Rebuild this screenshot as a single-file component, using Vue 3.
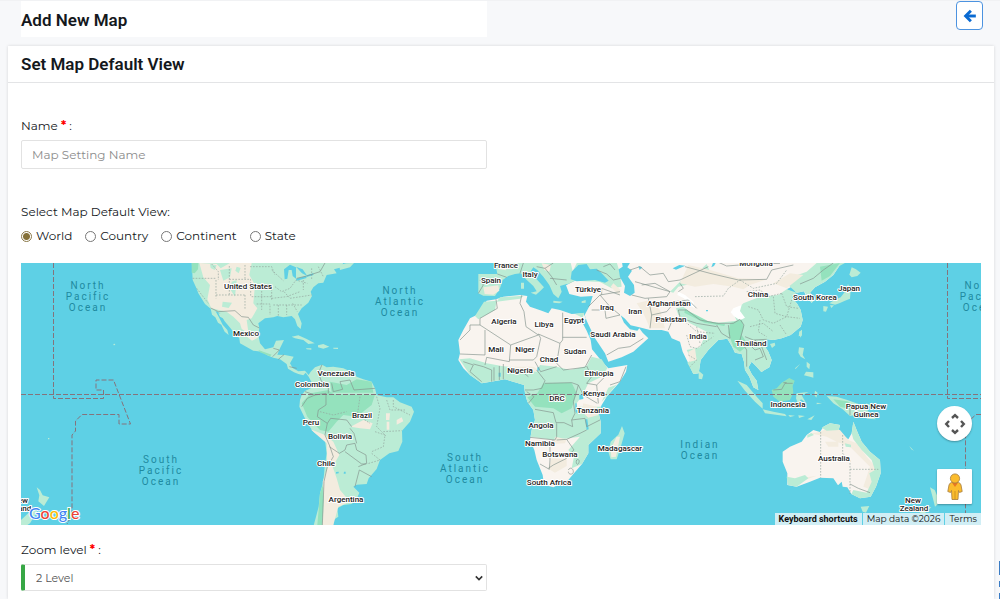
<script setup>
import { ref } from 'vue'

const name = ref('')
const view = ref('World')
const level = ref('2')
const views = ['World', 'Country', 'Continent', 'State']

const countries = [
  ['United States', 248, 289], ['Mexico', 246, 336], ['Venezuela', 336, 376], ['Colombia', 312, 387],
  ['Brazil', 362, 418], ['Peru', 311, 425], ['Bolivia', 340, 439], ['Chile', 326, 466], ['Argentina', 346, 502],
  ['France', 506, 268], ['Spain', 491, 283], ['Italy', 530, 277], ['Türkiye', 588, 292], ['Algeria', 504, 324],
  ['Libya', 544, 327], ['Egypt', 574, 323], ['Iraq', 607, 310], ['Iran', 635, 314], ['Saudi Arabia', 613, 337],
  ['Mali', 496, 352], ['Niger', 525, 352], ['Chad', 549, 362], ['Sudan', 575, 354], ['Nigeria', 520, 373],
  ['Ethiopia', 599, 376], ['Kenya', 594, 396], ['DRC', 557, 401], ['Tanzania', 593, 413], ['Angola', 541, 428],
  ['Namibia', 540, 446], ['Botswana', 560, 457], ['South Africa', 549, 485], ['Madagascar', 620, 451],
  ['Afghanistan', 669, 306], ['Pakistan', 671, 322], ['India', 698, 339], ['China', 758, 297], ['Mongolia', 756, 266],
  ['Thailand', 751, 346], ['South Korea', 815, 300], ['Japan', 849, 291], ['Indonesia', 788, 407],
  ['Papua New', 866, 409], ['Guinea', 866, 417], ['Australia', 834, 461], ['New', 913, 503], ['Zealand', 914, 511],
  ['New', 20, 503], ['Zealand', 17, 511]
]

const oceans = [
  [88, 289, ['North', 'Pacific', 'Ocean']], [400, 294, ['North', 'Atlantic', 'Ocean']],
  [161, 463, ['South', 'Pacific', 'Ocean']], [465, 461, ['South', 'Atlantic', 'Ocean']],
  [700, 448, ['Indian', 'Ocean']], [982, 289, ['North', 'Pacific', 'Ocean']]
]
</script>

<template>
  <main class="page">
    <header class="top">
      <h1 class="title">Add New Map</h1>
      <button class="back" type="button" aria-label="Back">
        <svg viewBox="0 0 24 24" width="14" height="14" fill="none" stroke="currentColor" stroke-width="5"><path d="M22 12H5" /><path d="M13.500 3L4.500 12 13.500 21" /></svg>
      </button>
    </header>

    <section class="card">
      <h2 class="card-title">Set Map Default View</h2>
      <form class="form" @submit.prevent>
        <div class="field">
          <label for="map-name">Name <span class="req">*</span> :</label>
          <input id="map-name" v-model="name" class="text" type="text" placeholder="Map Setting Name">
        </div>

        <fieldset class="views">
          <legend>Select Map Default View:</legend>
          <div class="options">
            <label v-for="v in views" :key="v" class="option">
              <input v-model="view" type="radio" name="view" :value="v">{{ v }}
            </label>
          </div>
        </fieldset>

        <div class="map">
          <svg class="world" viewBox="21 263 960 262" preserveAspectRatio="xMidYMid slice" role="img" aria-label="World map">
            <g transform="translate(190 260) scale(.33333)">
              <path class="green" d="M5 0L8 60 18 82 25 100 45 132 62 146 66 164 76 172 84 188 94 194 104 215 116 225 112 210 98 194 88 174 76 152 90 160 104 184 116 198 130 215 148 235 150 250 190 272 215 275 232 286 250 293 270 298 290 312 294 326 312 337 325 342 340 346 347 338 356 350 364 365 362 385 345 393 335 405 330 420 328 440 340 465 352 490 370 515 405 540 410 580 404 620 400 665 390 700 386 740 378 770 370 800H430L430 780 445 770 442 745 460 735 485 732 500 718 508 698 490 680 500 674 530 672 536 655 560 627 570 600 598 580 625 573 637 545 636 512 660 485 672 455 665 440 630 427 610 412 590 412 560 405 555 385 545 365 520 358 500 350 490 338 460 325 430 320 410 322 396 314 375 322 362 335 356 345 345 332 325 334 308 324 300 310 311 290 285 285 262 284 270 265 282 240 258 242 250 262 225 268 210 250 205 225 208 205 205 190 225 175 250 172 262 168 280 172 305 168 315 178 322 198 332 207 335 190 324 162 335 145 355 128 366 108 362 95 370 82 385 70 400 68 410 45 440 40 432 28 455 22 462 0Z" />
              <path class="green" d="M305 230L325 226 350 237 374 250 355 252 340 240 315 235ZM384 256L400 252 418 260 400 266 384 262ZM348 265l16 0 0 4-14-1ZM430 263l14 0 0 4-14-1ZM448 15L468 10 492 9 480 22 450 30Z" />
              <path class="deep" d="M5 0H26L24 28 14 40 5 38ZM362 400L415 390 430 402 555 404 545 435 500 470 460 465 440 485 415 515 390 510 352 470 335 430ZM420 365L470 375 500 358 545 365 550 398 425 398ZM390 700L402 665 397 795H382ZM205 270l40 14-5 5-30-12Z" />
              <path class="sand" d="M28 9L80 12 92 25 120 9H185L178 45 195 75 190 130 202 145 185 175 170 180 175 215 160 225 150 190 130 170 110 155 64 145 52 118 60 75 40 52ZM362 508L405 525 430 545 448 585 428 620 440 655 450 690 480 725 445 740 430 795H397L402 720 398 665 412 625 410 550 375 520ZM482 500L520 480 548 490 540 508 510 505ZM588 460h12l-2 20 -10 0ZM590 485h8v24h-8ZM620 480l15-8 5 12-20 10ZM168 228l38 4-20 10Z" />
              <path class="green" d="M90 30L125 25 120 52 100 62ZM125 65L140 60 135 110 122 90ZM98 125l28 3-10 16-20-4ZM85 160L110 162 145 200 168 215 150 220 120 185 90 170ZM60 12l20 4-6 14-12-6ZM140 20l12 4-6 16-10-8Z" />
              <path class="water" d="M282 28L300 14 318 22 318 56 308 48 305 30 296 30 292 56 284 58ZM318 20l20 8 14 20-16-8ZM318 56l30-8 2 6-30 8ZM350 46l20-6 0 5-20 6ZM462 635l5 0 0 6-6 0ZM438 636l8-1 0 5-8 1Z" />
              <path class="state" d="M8 55H78M78 60V115M20 85L55 130M118 18V105M165 15V60M78 105H165M65 12L85 35V60M118 58H182V110M180 20H245L255 45M165 105V150M185 75H245V120M200 132H240V165M245 115L290 110 330 95M250 135H335M265 135V170M290 135V165M308 130L322 155M255 80L275 95 300 85 318 60 352 70M282 95L300 115 365 105M340 60V90M245 30L280 62M365 25V60M385 20L400 50M510 410L502 465 540 490M560 410L570 445 560 500 590 530M590 420L600 450 645 450M610 420V440L660 465M555 515L585 525 580 560 545 575M580 515L635 512M545 580L570 600 530 612M390 455L430 465 470 455M185 110H245M215 75V110M215 110V150" />
              <path class="border" d="M62 144L85 155 135 152 155 170 175 172 190 195 208 204M320 55L350 48 390 35 405 9M250 265L268 270 248 290M265 298L282 284M298 320L320 325M396 314L385 340 395 365 415 370 415 400M345 395L375 405 408 400 408 435 385 450 382 470 412 490 422 475 470 480 485 500M425 370L430 395 458 388 450 365 480 360 492 390 555 385M335 440L352 415 375 405M412 490L405 525 420 560 430 590 412 620 402 665 397 795M418 560L448 580 465 570 470 555 495 550 500 570 528 585 530 610 505 620M465 575L515 612 528 612M495 680L508 630 545 650M500 550L492 520 480 505" />
            </g>

            <g transform="translate(420 260) scale(.33333)">
              <path class="green" d="M175 42L232 42 228 20 218 0H300L345 9H480L465 30 450 52 462 68 440 72 420 78 425 95 415 115 400 102 388 75 370 50 352 30 340 22 332 34 350 58 372 82 360 94 348 104 332 98 350 94 340 78 318 58 302 40 285 42 265 48 248 60 240 85 225 108 190 107 175 100ZM303 68h9v18h-9ZM400 122l28 3-10 5-18-2ZM485 124l12-4 0 8-12 1Z" />
              <path class="sand" d="M190 82L235 76 238 92 220 104 194 102ZM235 15l30 4-8 12-20-4ZM365 10l28 5-5 20-15-5Z" />
              <path class="desert" d="M200 122L228 118 250 110 300 105 322 108 318 125 330 140 365 152 385 160 395 145 420 150 455 162 490 160 498 175 488 190 500 212 512 240 516 268 530 285 550 310 565 325 622 315 618 335 600 365 560 410 545 435 535 455 542 485 542 520 505 555 505 580 486 612 460 642 445 660 400 682 372 674 368 645 350 600 343 570 330 540 335 510 345 480 340 450 322 425 315 400 312 375 290 368 255 358 230 362 185 370 150 345 130 325 115 300 120 280 115 240 130 210 150 175 170 165 190 140Z" />
              <path class="green" d="M118 298L150 295 200 310 245 318 275 322 350 335 360 315 410 320 450 330 500 318 515 290 545 298 562 325 545 350 505 370 488 405 470 430 465 455 478 440 545 440 535 455 542 485 542 520 505 555 505 580 486 612 455 625 462 590 445 570 480 530 405 540 332 530 335 510 345 480 340 450 322 425 315 400 312 375 290 368 255 358 230 362 185 370 150 345ZM192 125L230 122 225 150 175 178 165 168ZM565 383L590 374 555 415 545 425ZM240 112L312 107 300 116 230 125ZM465 162l28-4-5 15Z" />
              <path class="deep" d="M370 370L455 368 470 400 455 445 425 460 400 445 345 440 322 412 352 400Z" />
              <path class="sand" d="M270 320h70l20 12-60 5ZM405 530L440 538 435 550 400 552ZM490 430l40 10 5 25-30 8-20-18ZM395 595l45 3 0 20-35 20-20-12Z" />
              <path class="green" d="M606 498L614 520 603 558 590 598 572 598 565 575 572 545 595 524Z" /><path class="sand" d="M590 530L600 530 588 590 574 592 572 568Z" />
              <path class="water" d="M478 405l12-4 0 16-12 2ZM466 430l4 0 2 32-6-8ZM496 478l6 0 4 30-6 2ZM236 338l6 0 0 12-6 0ZM352 322l6 0 0 10-6 0Z" />
              <path class="border" d="M228 118L232 145 180 175V195L272 255 355 225 318 200 312 155 300 130 305 106M355 222L420 250 428 240V158M428 232H500M195 210V285L120 282M180 195H150V210L120 240M272 255L268 305 200 292 195 315M268 300H340L350 290 362 235 355 222M420 250L410 310 430 330 495 322 515 285M345 305L362 335 410 320M130 305L160 315 150 335 185 365M160 312L190 320 215 330V365M222 322V362M238 318V360M250 312V358M262 325L300 330 325 350M350 330L375 362 365 385 340 390H315M320 395L342 410 325 430M375 370L455 368 475 375 468 400 460 425 465 460 455 480 458 500 432 488H408L400 458 345 448M410 490V530L405 540 330 532M410 540L440 538 480 520 500 510M360 612L388 628 390 600V555L400 540M440 595L400 615 385 625M440 538L462 570 440 590M455 480L495 475 500 500 540 480M500 318L515 350 500 370 530 375 565 340M475 375L490 405 532 430M530 375L535 430M570 375L600 365 618 320M175 100L190 75 180 60M232 42L260 52M300 40L310 9M350 20L375 25 395 50 410 75M375 25L400 9M390 55L440 60M448 72L462 60M445 630c5-10 15-5 15 5s-15 10-15 0M470 600c6-4 10 2 6 10s-10-2-6-10" />
            </g>

            <g transform="translate(600 260) scale(.33333)">
              <path class="desert" d="M-90 0H735L718 18 700 45 675 65 645 82 630 98 645 118 635 128 618 108 612 94 590 98 575 80 560 88 580 98 575 112 592 132 602 150 608 180 602 200 572 225 545 235 520 240 502 238 490 252 505 275 515 300 508 322 484 336 468 318 455 305 445 322 455 342 470 362 475 390 460 382 448 350 435 330 432 305 425 282 405 278 395 258 382 236 355 240 325 270 302 300 296 340 280 342 265 310 248 275 240 245 215 235 205 215 185 210 150 210 118 202 92 196 75 176 62 166 72 188 90 208 112 212 118 205 128 218 145 235 100 275 65 292 25 305 15 280 -15 235 -40 182 -46 165 -30 135 -22 108 -58 110 -92 102 -102 76 -75 62Z" />
              <path class="green" d="M-65 0H48L60 40 65 80 35 85 0 66 -75 62 -100 72 -95 60ZM210 95L240 65 285 45 320 12 330 35 280 70 235 80 220 98ZM228 145L250 140 300 180 355 188 410 182 400 160 430 130 480 110 535 105 560 88 590 98 575 112 592 132 602 150 608 180 602 200 572 225 545 235 520 240 502 238 490 252 505 275 515 300 508 322 484 336 468 318 455 305 445 322 455 342 470 362 475 390 460 382 448 350 435 330 432 305 425 282 405 278 395 258 382 236 355 240 325 270 302 300 296 340 280 342 262 308 275 300 260 270 300 262 320 215 270 190 235 165ZM550 60L620 35 650 9H735L718 18 700 45 675 65 645 82 630 98 645 118 635 128 612 94 590 98 570 80Z" />
              <path class="deep" d="M390 190L425 178 432 200 425 225 445 255 420 275 400 260 385 220ZM660 20L720 9 690 48 665 62ZM255 148l70 36 50 8-2 6-60-10-60-30Z" />
              <path class="sand" d="M265 15L330 30 415 55 500 58 450 75 430 88 400 80 340 72 285 80 240 70ZM110 130L150 120 180 150 195 205 150 205 130 160ZM265 275L285 265 290 300 270 305ZM520 70l50-30 40 5-50 40ZM40 70l22 20-5 15-25-25Z" />
              <path class="snow" d="M400 145l25-10-5 18 15 20-15 8-18-12-10-12ZM235 95l20 10 25 20 5 20-18-10-15-20-20-10Z" />
              <path class="water" d="M-88 58L-85 35 -65 15 -40 12 -30 28 -10 26 5 40 26 62 15 68 -15 60 -70 64ZM65 0H95L82 22 96 32 84 50 102 75 104 98 90 108 72 98 75 78 60 52 56 28 68 20ZM115 18l12 4-8 8ZM218 25l20-10 18 2-28 12ZM342 0h10l-10 18-8 4ZM318 150l6 0 0 4-6 0Z" />
              <path class="green" d="M296 332l14 12-4 14-10-2ZM412 362L440 375 470 410 488 430 488 446 465 425 435 392ZM488 448L520 455 555 462 560 469 495 460ZM565 465l20 2-15 4ZM595 466l20 2-18 6ZM622 478l22-12-10 14ZM590 400L626 396 605 406 618 428 603 418 594 432 588 415ZM510 252l14-4 2 8-10 8ZM598 215l8-6 0 16-5 8ZM597 262L612 264 608 285 616 298 602 290 595 278ZM618 335l22 2 0 16-10-3-18-4ZM620 305l10 8-2 15-8-8ZM585 325l16-14-14 16ZM645 392l8 6-4 15-6-8ZM650 428l16 2-16 3Z" />
              <path class="deep" d="M515 390L530 385 545 368 568 354 584 362 578 378 580 398 570 420 540 425 520 410Z" />
              <path class="state" d="M285 110L370 108 385 85 420 60M250 180L290 215 345 220M260 225L270 260 290 265 340 230M265 285L290 300 270 320M290 200L300 250M440 95L480 90 505 110 545 100M445 140L475 150 490 180 520 190 560 170 600 175M450 200L490 190 520 215M520 110L525 160 560 170 575 120M545 100L560 140 595 145M480 180L475 215 500 230M420 60L460 85 530 70 560 30M540 195L560 225" />
              <path class="border" d="M-35 140L0 105 60 95M-25 150L15 150 18 175 60 165M0 105L30 140 60 165M5 105V85L60 105M95 105L135 115 200 110 210 95 105 65M90 30L120 20 150 45 190 40 205 65 240 60 325 20M125 75L165 70 210 95M145 115L155 165 150 205M155 165L200 155 225 125 265 120 290 145M205 210L215 185 240 170 235 150 260 150 300 180 350 190 400 190 420 178 432 195 420 240 440 270 440 320M235 95L250 85 240 70M255 20L330 40 415 60 500 58 515 30 580 15M340 0L380 18 460 12 540 10M260 180L290 190 350 200M350 195L365 220 390 235 385 195M440 245L465 270 480 265 490 290 465 300M465 240L485 260 500 300M435 230L460 240 500 238M600 72L640 55 670 30 700 9M520 390L545 388 555 370 578 370M20 285L55 265 90 260 130 235M550 368l10 0M-10 30L20 42 40 60 62 55M10 20L30 12 45 30" />
            </g>

            <g transform="translate(770 260) scale(.33333)">
              <path class="green" d="M245 22L258 28 272 38 262 48 245 52 238 44ZM234 72L242 90 240 116 225 122 208 130 195 134 178 130 190 122 212 112 226 94ZM160 138L174 140 168 155 160 154ZM180 136l12 0-8 8ZM170 408L200 410 232 420 265 432 290 448 304 465 318 478 292 476 268 462 240 468 218 448 190 430ZM288 430l20 8-16 2ZM272 740L298 738 288 758 278 755ZM480 682L494 690 502 708 520 710 508 728 495 740 490 720ZM470 740L484 742 468 756 440 785 420 792 430 775ZM418 558l8 8 6 6-8-4ZM88 215l8-4-2 16-8 2Z" />
              <path class="deep" d="M190 418L232 424 270 446 250 450 210 440Z" />
              <path class="desert" d="M38 575L60 560 95 545 110 525 130 510 150 516 160 500 180 490 210 495 205 515 235 538 245 520 250 485 262 515 275 545 300 575 330 600 332 640 318 680 302 710 270 715 244 702 232 682 218 680 215 665 204 676 190 655 150 653 120 665 80 680 52 675 52 640 38 605Z" />
              <path class="sand" d="M120 520L150 516 180 500 210 510 235 540 260 550 290 590 325 630 305 690 280 680 300 620 240 560 200 545 170 530ZM165 545h40v15h-30ZM90 655l50-8-50 18Z" />
              <path class="green" d="M155 503L180 490 210 495 206 510 170 512ZM245 520L250 485 262 515 275 545 300 575 330 600 332 640 318 680 302 710 270 715 244 702 250 690 290 698 305 665 298 640 315 630 305 600 275 570 250 538ZM50 650L75 655 105 645 115 655 80 680 54 675ZM112 525l12-6 8 6-20 8ZM225 550l18 4 0 8-16-2Z" />
              <path class="state" d="M152 516V653M218 525V580M240 600V702M240 628H325M218 580L240 605" /><path class="border" d="M240 672L265 685 300 698M240 440V466" />
            </g>

            <g transform="translate(0 260) scale(.33333)">
              <path class="green" d="M110 682L120 690 128 706 148 712 132 738 115 724 118 706ZM63 800V780L95 750 112 754 90 790 75 800ZM340 252l4-1 2 4-5 1ZM144 534l4 0 0 4-4 0Z" />
            </g>

            <path class="dateline" d="M21 394.500H981" />
            <path class="zone" d="M53.500 263V398.500H103.500V390H96V380H113.500L130.500 424H119V414.500H82L75.500 421V431L72 435V515L67 524M947.500 263V398.500H981M981 414.500H976L968 422V431L965.500 435V525" />

            <g class="ocean">
              <text v-for="(o, i) in oceans" :key="i" :x="o[0]" :y="o[1]">
                <tspan v-for="(line, n) in o[2]" :key="line" :x="o[0]" :dy="n ? 11 : 0">{{ line }}</tspan>
              </text>
            </g>
            <g class="country">
              <text v-for="(c, i) in countries" :key="i" :x="c[1]" :y="c[2]">{{ c[0] }}</text>
            </g>
            <text class="google" x="29" y="519"><tspan fill="#4285f4">G</tspan><tspan fill="#ea4335">o</tspan><tspan fill="#fbbc04">o</tspan><tspan fill="#4285f4">g</tspan><tspan fill="#34a853">l</tspan><tspan fill="#ea4335">e</tspan></text>
          </svg>

          <div class="controls">
            <button class="pan" type="button" aria-label="Map camera controls">
              <svg viewBox="0 0 22 22" width="22" height="22" fill="none" stroke="#555" stroke-width="2.400"><path d="M8 5L11 2.200 14 5M8 17L11 19.800 14 17M5 8L2.200 11 5 14M17 8L19.800 11 17 14" /></svg>
            </button>
            <button class="pegman" type="button" aria-label="Street View">
              <svg viewBox="0 0 16 28" width="16" height="28"><path d="M4.500 9.500Q2.500 10 2 12L.8 18.500 3.500 19.500 4.500 17.500 5 26.500H11L11.500 17.500 12.500 19.500 15.200 18.500 14 12Q13.500 10 11.500 9.500Z" fill="#fbbc2d" stroke="#a47b3d" stroke-width=".8" /><path d="M8 18V26.500" stroke="#c78c20" stroke-width=".8" /><path d="M5 9.800H11L8 14Z" fill="#e87722" /><circle cx="8" cy="5.500" r="4.600" fill="#fbbc2d" stroke="#a47b3d" stroke-width=".8" /></svg>
            </button>
          </div>
          <div class="credits">
            <button class="keys" type="button">Keyboard shortcuts</button>
            <span>Map data ©2026</span>
            <a href="#terms">Terms</a>
          </div>
        </div>

        <div class="field zoom">
          <label for="zoom-level">Zoom level <span class="req">*</span> :</label>
          <div class="select">
            <select id="zoom-level" v-model="level">
              <option value="2">2 Level</option>
              <option value="3">3 Level</option>
              <option value="4">4 Level</option>
            </select>
            <svg viewBox="0 0 10 6" width="8" height="6" fill="none" stroke="#333" stroke-width="2"><path d="M1 1L5 5 9 1" /></svg>
          </div>
        </div>
      </form>
    </section>
    <div class="edge" aria-hidden="true"><i></i><i></i><i></i></div>
  </main>
</template>

<style>
body { background: #f7f8fa; overflow: hidden; }
</style>

<style scoped>
* { box-sizing: border-box; }
.page { font: 12px/20px Montserrat, Inter, sans-serif; color: #14181c; min-height: 100vh; display: flex; flex-direction: column; }
.top { display: flex; justify-content: space-between; align-items: flex-start; padding: 0 17px 8px 21px; border-top: 1px solid #f1f2f4; }
.title, .card-title { margin: 0; font: 600 17px/33px Roboto, sans-serif; color: #14181c; }
.title { background: #fff; width: 466px; max-width: 50%; padding-top: 3px; }
.back { width: 27px; height: 29px; padding: 0; display: grid; place-items: center; background: #fff; color: #0a6ad2; border: 1px solid #4c93e0; border-radius: 4px; }
.card { background: #fff; margin: 1px 6px 0 8px; flex: 1; box-shadow: 0 0 3px #00000024; }
.card-title { padding: 2px 13px 1px; border-bottom: 1px solid #e3e4e6; }
.form { padding: 33px 13px 8px; display: flex; flex-direction: column; }
.field { width: calc(50% - 14px); display: flex; flex-direction: column; gap: 4px; }
.req { color: #f00; font-weight: 700; }
.text { height: 29px; border: 1px solid #e2e2e2; border-radius: 2px; padding: 0 10px; font: inherit; color: #495057; background: #fff; }
.text::placeholder { color: #8c8c8c; opacity: 1; }
.views { border: 0; margin: 33px 0 0; padding: 0; }
.views legend { padding: 0; }
.options { display: flex; gap: 13px; margin-top: 4px; }
.option { display: flex; align-items: center; gap: 4px; }
.option input { appearance: none; width: 11px; height: 11px; margin: 0; border: 1px solid #777; border-radius: 50%; background: #fff; }
.option input:checked { border-color: #8a7847; background: radial-gradient(#857038 0 3px, #fff 4px); }
.map { position: relative; height: 262px; margin-top: 17px; overflow: hidden; background: #5ed0e5; }
.world { display: block; width: 100%; height: 100%; }
.green { fill: #bbecd5; }
.deep { fill: #94e2bd; }
.sand { fill: #f3ecdf; }
.desert { fill: #f9f4ef; }
.snow { fill: #fff; }
.water { fill: #5ed0e5; }
.border { fill: none; stroke: #83928d; stroke-width: 2; }
.state { fill: none; stroke: #93a59d; stroke-width: 2; stroke-dasharray: 5 4; }
.dateline, .zone { fill: none; stroke: #85737c; stroke-width: 1; stroke-dasharray: 5 2; }
.ocean { font: 400 10px Roboto, sans-serif; letter-spacing: 2px; fill: #1f8aa0; text-anchor: middle; }
.country { font: 500 8px Roboto, sans-serif; fill: #222; stroke: #fff; stroke-width: 2px; stroke-linejoin: round; paint-order: stroke; text-anchor: middle; }
.google { font: 500 16px Lato, sans-serif; stroke: #fff; stroke-width: 2px; paint-order: stroke; }
.controls { position: absolute; right: 9px; bottom: 21px; display: grid; gap: 28px; }
.controls button { width: 35px; height: 35px; border: 0; padding: 0; background: #fff; display: grid; place-items: center; box-shadow: 0 1px 2px #0000004d; }
.controls .pan { border-radius: 50%; }
.controls .pegman { border-radius: 1px; }
.credits { position: absolute; right: 0; bottom: 0; display: flex; gap: 1px; font-size: 9px; line-height: 12px; }
.credits > * { background: #d0eef5; padding: 0 4px; color: #111; text-decoration: none; }
.credits .keys { border: 0; font: 700 9px/12px Roboto, sans-serif; }
.zoom { margin-top: 15px; }
.select { position: relative; display: grid; }
.select select { appearance: none; height: 27px; border: 1px solid #e2e2e2; border-left: 4px solid #37a745; border-radius: 2px; padding: 0 11px; font: 11px Montserrat, Inter, sans-serif; color: #555; background: #fff; }
.select svg { position: absolute; right: 4px; top: 11px; pointer-events: none; }
.edge { position: absolute; right: 0; bottom: 0; width: 1px; display: grid; gap: 6px; }
.edge i { height: 6px; background: #3b7cc4; }
.edge i:first-child { height: 14px; }
</style>
